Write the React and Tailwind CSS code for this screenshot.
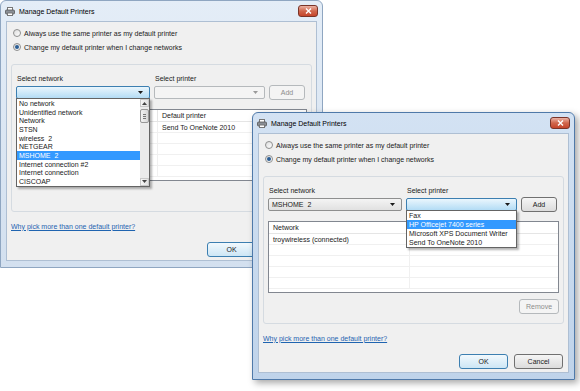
import React from 'react'

const networks = [
  'No network',
  'Unidentified network',
  'Network',
  'STSN',
  'wireless  2',
  'NETGEAR',
  'MSHOME  2',
  'Internet connection #2',
  'Internet connection',
  'CISCOAP',
]

const printers = ['Fax', 'HP Officejet 7400 series', 'Microsoft XPS Document Writer', 'Send To OneNote 2010']

export default function App() {
  return (
    <div className="relative h-[391px] w-[580px] overflow-hidden bg-white font-['Liberation_Sans',Arial,sans-serif] text-[7px] leading-none text-[#1a1a1a]">
      {/* back window: network list open, first column and lower right hidden */}
      <Dialog
        className="left-0 top-0 z-0"
        networkCombo={
          <Combo focused>
            <DropList items={networks} selected="MSHOME  2" itemClass="h-[8.7px]" scroll />
          </Combo>
        }
        printerCombo={<Combo disabled />}
        addDisabled
        covered
        headers={['', 'Default printer']}
        rows={[['', 'Send To OneNote 2010']]}
      />
      <Dialog
        className="left-[252px] top-[112px] z-10"
        active
        networkCombo={<Combo value="MSHOME  2" />}
        printerCombo={
          <Combo focused>
            <DropList items={printers} selected="HP Officejet 7400 series" itemClass="h-[9px]" />
          </Combo>
        }
        headers={['Network', '']}
        rows={[['troywireless (connected)', '']]}
      />
    </div>
  )
}

function Dialog({ className, active, covered, networkCombo, printerCombo, addDisabled, headers, rows }) {
  const frame = active
    ? 'border-[#4f79a9] bg-linear-to-b from-[#d3e2f3] to-[#bfd3ea] shadow-[3px_3px_7px_rgba(0,0,0,0.35)]'
    : 'border-[#8fa6c1] bg-linear-to-b from-[#e4edf7] to-[#d3e0ef]'
  const empty = Array.from({ length: 5 - rows.length })

  return (
    <div className={`absolute flex h-[268px] w-[323px] flex-col rounded-t-[6px] border ${frame} ${className}`}>
      <div className="flex h-[20px] items-center px-[4px]">
        <PrinterIcon />
        <span className="ml-[4px] text-black">Manage Default Printers</span>
        <div className="ml-auto flex h-[12px] w-[20px] items-center justify-center rounded-[3px] border border-[#7a3428] bg-linear-to-b from-[#eab2a4] via-[#d0664c] to-[#c5442a]">
          <svg width="7" height="6" viewBox="0 0 7 6">
            <path d="M1 0.5l5 5M6 0.5l-5 5" stroke="white" strokeWidth="1.4" />
          </svg>
        </div>
      </div>

      <div className="mx-[5px] flex h-[240px] flex-col border border-[#aebfd3] bg-[#f0f0f0]">
        <div className="pt-[4px]">
          <Radio label="Always use the same printer as my default printer" />
          <Radio checked label="Change my default printer when I change networks" />
        </div>

        <div className="mx-[4px] mt-[10px] h-[148px] rounded-[3px] border border-[#d5dbe1] px-[4px] pt-[8px]">
          <div className="grid grid-cols-[134px_111px_36px] gap-x-[4px]">
            <div className="flex h-[10px] items-center pl-[1px]">Select network</div>
            <div className="flex h-[10px] items-center pl-[1px]">Select printer</div>
            <div />
            <div className="mt-[3px]">{networkCombo}</div>
            <div className="mt-[3px]">{printerCombo}</div>
            <div className="mt-[2px]">
              <Button disabled={addDisabled} className="w-[36px]">Add</Button>
            </div>
          </div>

          <div className="mt-[9px] h-[72px] border border-[#828790] bg-white">
            <div className="flex h-[12px] border-b border-[#e5e5e5]">
              <div className="flex w-[141px] items-center border-r border-[#e5e5e5] pl-[4px]">{headers[0]}</div>
              <div className="flex flex-1 items-center pl-[4px]">{headers[1]}</div>
            </div>
            {rows.map((r, i) => (
              <div key={i} className="flex h-[11px] border-b border-[#f0f0f0]">
                <div className="flex w-[141px] items-center border-r border-[#f0f0f0] pl-[4px]">{r[0]}</div>
                <div className="flex flex-1 items-center pl-[4px]">{r[1]}</div>
              </div>
            ))}
            {empty.map((_, i) => (
              <div key={i} className="flex h-[11px] border-b border-[#f0f0f0]">
                <div className="w-[141px] border-r border-[#f0f0f0]" />
              </div>
            ))}
          </div>

          <div className="mt-[6px] flex h-[15px] justify-end">
            {!covered && <Button disabled className="w-[40px]">Remove</Button>}
          </div>
        </div>

        <div className="mt-[9px] ml-[4px] flex h-[10px] items-center">
          <span className="text-[#1f64b0] underline">Why pick more than one default printer?</span>
        </div>

        <div className="mt-[11px] flex justify-end gap-[6px] pr-[5px]">
          <Button primary className="w-[49px]">OK</Button>
          {covered ? <div className="w-[49px]" /> : <Button className="w-[49px]">Cancel</Button>}
        </div>
      </div>
    </div>
  )
}

function Radio({ checked, label }) {
  return (
    <div className="flex h-[14px] items-center">
      <span className="ml-[6px] flex h-[8px] w-[8px] items-center justify-center rounded-full border border-[#8e8f8f] bg-linear-to-br from-[#dcdcdc] to-white">
        {checked && <span className="h-[4px] w-[4px] rounded-full bg-[#2a5d94]" />}
      </span>
      <span className="ml-[3px]">{label}</span>
    </div>
  )
}

function Combo({ value, focused, disabled, children }) {
  const skin = focused
    ? 'border-[#3c7fb1] bg-linear-to-b from-[#eaf6fd] to-[#b3dcf5]'
    : disabled
      ? 'border-[#b5b9bc] bg-[#f4f4f4]'
      : 'border-[#8e8f8f] bg-linear-to-b from-[#f4f4f4] to-[#e1e1e1]'
  return (
    <div className={`relative flex h-[13px] items-center rounded-[2px] border pl-[3px] pr-[6px] ${skin}`}>
      <span className="flex-1 whitespace-pre">{value}</span>
      <svg width="5" height="3" viewBox="0 0 5 3">
        <path d="M0 0h5L2.5 3z" fill={disabled ? '#9a9a9a' : '#1a1a1a'} />
      </svg>
      {children}
    </div>
  )
}

function DropList({ items, selected, itemClass, scroll }) {
  return (
    <div className="absolute -left-px top-full z-20 flex w-[calc(100%+2px)] border border-[#646464] bg-white shadow-[2px_2px_2px_rgba(0,0,0,0.3)]">
      <div className="flex flex-1 flex-col">
        {items.map(it => (
          <div
            key={it}
            className={`flex items-center whitespace-pre pl-[2px] ${itemClass} ${it === selected ? 'bg-[#3399ff] text-white' : ''}`}
          >
            {it}
          </div>
        ))}
      </div>
      {scroll && (
        <div className="flex w-[9px] flex-col bg-[#ebebeb]">
          <div className="flex h-[8px] items-center justify-center border border-[#c9c9c9] bg-linear-to-r from-[#f6f6f6] to-[#e2e2e2]">
            <svg width="5" height="3" viewBox="0 0 5 3"><path d="M0 3h5L2.5 0z" fill="#444" /></svg>
          </div>
          <div className="mt-[2px] flex h-[14px] flex-col items-center justify-center gap-[1px] rounded-[2px] border border-[#979797] bg-linear-to-r from-[#f3f3f3] to-[#d8d8d8]">
            <span className="h-px w-[3px] bg-[#777]" />
            <span className="h-px w-[3px] bg-[#777]" />
            <span className="h-px w-[3px] bg-[#777]" />
          </div>
          <div className="flex-1" />
          <div className="flex h-[8px] items-center justify-center border border-[#c9c9c9] bg-linear-to-r from-[#f6f6f6] to-[#e2e2e2]">
            <svg width="5" height="3" viewBox="0 0 5 3"><path d="M0 0h5L2.5 3z" fill="#444" /></svg>
          </div>
        </div>
      )}
    </div>
  )
}

function Button({ children, disabled, primary, className }) {
  const skin = disabled
    ? 'border-[#b5b9bc] bg-[#f4f4f4] text-[#8d8d8d]'
    : primary
      ? 'border-[#3c7fb1] bg-linear-to-b from-[#f2f9fd] to-[#cde6f5]'
      : 'border-[#707070] bg-linear-to-b from-[#f5f5f5] to-[#dcdcdc]'
  return (
    <div className={`flex h-[15px] items-center justify-center rounded-[3px] border ${skin} ${className}`}>
      {children}
    </div>
  )
}

function PrinterIcon() {
  return (
    <svg width="10" height="9" viewBox="0 0 10 9">
      <rect x="2.5" y="0.5" width="5" height="3" fill="#fff" stroke="#777" />
      <rect x="0.5" y="3" width="9" height="4" rx="1" fill="#8a8f96" stroke="#555" strokeWidth="0.8" />
      <rect x="2.5" y="6" width="5" height="2.5" fill="#fff" stroke="#777" />
    </svg>
  )
}
